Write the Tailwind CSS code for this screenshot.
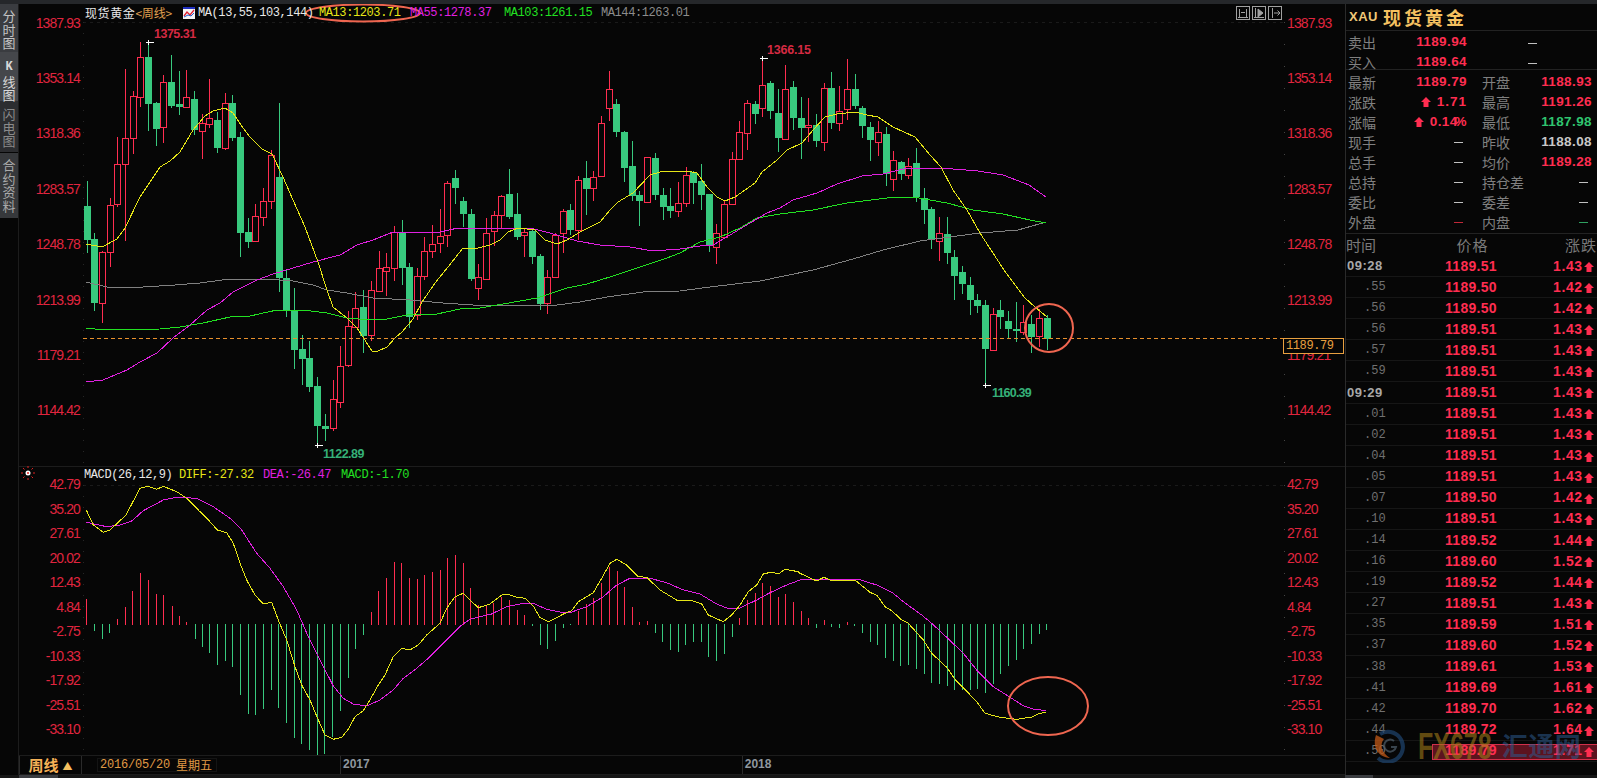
<!DOCTYPE html>
<html lang="zh">
<head>
  <meta charset="UTF-8">
  <title>现货黄金 周线</title>
  <script src="https://cdn.jsdelivr.net/npm/@tailwindcss/browser@4"></script>
</head>
<body class="bg-[#060606] overflow-hidden font-['Liberation_Sans','Noto_Sans_CJK_SC',sans-serif]">
<div class="w-[1597px] h-[778px] flex flex-col overflow-hidden">
  <div class="h-[4px] bg-[#25272a]"></div>

  <div class="flex h-[771px]">
    <!-- 左侧标签 -->
    <div class="w-[19px] border-r border-[#1c1c1c] text-[13px] leading-[13.5px] text-center font-['Noto_Sans_CJK_SC',sans-serif]">
      <div class="h-[48px] pt-[5px] bg-[#3a3c40] text-[#c4c4c4]">分<br>时<br>图</div>
      <div class="h-[49px] pt-[6px] bg-[#45474b] text-[#d8d8d8]"><span class="font-['Liberation_Mono',monospace] font-bold text-[12px]">K</span><br>线<br>图</div>
      <div class="h-[51px] pt-[6px] bg-[#2c2d30] text-[#8a8a8a]">闪<br>电<br>图</div>
      <div class="h-[65px] mt-[1px] pt-[5px] bg-[#36383b] text-[#aaaaaa]">合<br>约<br>资<br>料</div>
    </div>

    <!-- 图表区 -->
    <div class="w-[1326px] relative flex flex-col">
      <!-- K线 -->
      <div class="h-[463px] flex border-b border-[#1c1c1c]">
        <div class="w-[64px] pt-[10.7px] pr-[3px] flex flex-col gap-y-[39.4px] items-end text-[14px] leading-[16px] tracking-[-0.9px] text-[#e0253f]">
          <span>1387.93</span><span>1353.14</span><span>1318.36</span><span>1283.57</span><span>1248.78</span><span>1213.99</span><span>1179.21</span><span>1144.42</span>
        </div>
        <div class="w-[1202px] relative">
          <svg id="kline" class="absolute inset-0" width="1202" height="462" viewBox="83 4 1202 462"></svg>
          <div class="relative h-[18px] flex items-center justify-between pl-[2px] pr-[3px] text-[12px] leading-[18px] tracking-[-0.4px] font-['Liberation_Mono','Noto_Sans_CJK_SC',monospace]">
            <div class="flex items-center">
              <span class="text-[#e8e8e8] tracking-[0.6px] font-['Noto_Sans_CJK_SC',sans-serif]">现货黄金</span>
              <span class="text-[#e0a050] tracking-[-0.2px] font-['Noto_Sans_CJK_SC',sans-serif]">&lt;周线&gt;</span>
              <svg class="ml-[11px] mr-[3px]" width="12" height="12" viewBox="0 0 12 12"><rect width="12" height="12" fill="#f4f4f4"/><rect width="12" height="2" fill="#2030c0"/><path d="M1 9 L4 5 L7 8 L11 3" fill="none" stroke="#e02030" stroke-width="1.3"/><path d="M1 10 L5 8 L8 9 L11 6" fill="none" stroke="#2060d0"/></svg>
              <span class="text-[#e8e8e8] w-[121px] whitespace-nowrap">MA(13,55,103,144)</span>
              <span class="text-[#e6e617] w-[91px]">MA13:1203.71</span>
              <span class="text-[#e020e0] w-[94px]">MA55:1278.37</span>
              <span class="text-[#22e022] w-[97px]">MA103:1261.15</span>
              <span class="text-[#8c8c8c]">MA144:1263.01</span>
            </div>
            <div class="flex gap-[2px]">
              <svg width="14" height="14" viewBox="0 0 14 14" fill="none" stroke="#a0a0a0"><rect x=".5" y=".5" width="13" height="13"/><path d="M3.5 3v8M10.5 3v8M2 11.5h10M5 6.5h4"/></svg>
              <svg width="14" height="14" viewBox="0 0 14 14" fill="none" stroke="#a0a0a0"><rect x=".5" y=".5" width="13" height="13"/><path d="M3.5 2v10M2 11.5h10"/><path d="M6 3l5 4-5 4z" fill="#a0a0a0"/></svg>
              <svg width="14" height="14" viewBox="0 0 14 14" fill="none" stroke="#a0a0a0"><rect x=".5" y=".5" width="13" height="13"/><path d="M4.5 2v10M6 7h6M9.500 4.500l2.500 2.500-2.500 2.500"/></svg>
            </div>
          </div>
          <!-- 高低点标注 -->
          <span class="absolute left-[71px] top-[22px] text-[12.5px] leading-[16px] font-bold tracking-[-0.5px] text-[#d42a42]">1375.31</span>
          <span class="absolute left-[684px] top-[38px] text-[12.5px] leading-[16px] font-bold tracking-[-0.2px] text-[#d42a42]">1366.15</span>
          <span class="absolute left-[240px] top-[442px] text-[12.5px] leading-[16px] font-bold tracking-[-0.5px] text-[#35b078]">1122.89</span>
          <span class="absolute left-[909px] top-[381px] text-[12.5px] leading-[16px] font-bold tracking-[-0.8px] text-[#35b078]">1160.39</span>
        </div>
        <div class="flex-1 pt-[10.7px] pl-[2px] flex flex-col gap-y-[39.4px] text-[14px] leading-[16px] tracking-[-0.9px] text-[#e0253f]">
          <span>1387.93</span><span>1353.14</span><span>1318.36</span><span>1283.57</span><span>1248.78</span><span>1213.99</span><span>1179.21</span><span>1144.42</span>
        </div>
      </div>

      <!-- MACD -->
      <div class="h-[288px] flex">
        <div class="w-[64px] relative pt-[9px] pr-[3px] flex flex-col gap-y-[8.5px] items-end text-[14px] leading-[16px] tracking-[-0.9px] text-[#e0253f]">
          <svg class="absolute left-[2px] top-[-1px]" width="14" height="14" viewBox="0 0 14 14" stroke="#e02020"><path d="M7 0v2M7 12v2M0 7h2M12 7h2M2 2l1.500 1.500M12 2l-1.500 1.500M2 12l1.500-1.500M12 12l-1.500-1.500"/><circle cx="7" cy="7" r="2.500" fill="#ffffff" stroke="none"/><circle cx="7" cy="7" r="1" fill="#e02020" stroke="none"/></svg>
          <span>42.79</span><span>35.20</span><span>27.61</span><span>20.02</span><span>12.43</span><span>4.84</span><span>-2.75</span><span>-10.33</span><span>-17.92</span><span>-25.51</span><span>-33.10</span>
        </div>
        <div class="w-[1202px] relative">
          <svg id="macd" class="absolute inset-0" width="1202" height="288" viewBox="83 467 1202 288"></svg>
          <div class="relative h-[17px] pl-[1px] flex items-center text-[12px] leading-[17px] tracking-[-0.4px] font-['Liberation_Mono',monospace]">
            <span class="text-[#e8e8e8] w-[95px]">MACD(26,12,9)</span>
            <span class="text-[#e6e617] w-[84px]">DIFF:-27.32</span>
            <span class="text-[#e020e0] w-[78px]">DEA:-26.47</span>
            <span class="text-[#22e022]">MACD:-1.70</span>
          </div>
        </div>
        <div class="flex-1 pt-[9px] pl-[2px] flex flex-col gap-y-[8.5px] text-[14px] leading-[16px] tracking-[-0.9px] text-[#e0253f]">
          <span>42.79</span><span>35.20</span><span>27.61</span><span>20.02</span><span>12.43</span><span>4.84</span><span>-2.75</span><span>-10.33</span><span>-17.92</span><span>-25.51</span><span>-33.10</span>
        </div>
      </div>

      <!-- 时间轴 -->
      <div class="h-[20px] flex items-center border-t border-[#1c1c1c] border-b">
        <div class="w-[63px] h-full flex items-center justify-center gap-[4px] border-x border-[#2a2a2a] text-[#f5b056] font-bold text-[15px] font-['Noto_Sans_CJK_SC',sans-serif]">
          <span>周线</span><span class="text-[10px] text-[#f5c060]">▲</span>
        </div>
        <div class="ml-[15px] w-[120px] h-[14px] flex items-center pl-[2px] gap-[6px] border border-[#141414] text-[#e09a45] text-[12px] leading-[14px]">
          <span class="font-['Liberation_Mono',monospace] tracking-[-0.2px]">2016/05/20</span><span class="font-['Noto_Sans_CJK_SC',sans-serif]">星期五</span>
        </div>
        <div class="ml-[123px] h-full border-l border-[#2a2a2a] pl-[2px] text-[12px] leading-[16px] font-bold text-[#8f979f]">2017</div>
        <div class="ml-[372px] h-full border-l border-[#2a2a2a] pl-[2px] text-[12px] leading-[16px] font-bold text-[#8f979f]">2018</div>
      </div>

      <!-- 当前价 -->
      <div class="absolute left-[1264px] top-[334px] w-[61px] h-[16px] border border-[#e8a040] bg-[#060606] text-[#e8a040] text-[12px] leading-[14px] pl-[2px] tracking-[-0.4px] font-['Liberation_Mono',monospace]">1189.79</div>
    </div>

    <!-- 右侧报价 -->
    <div class="flex-1 relative border-l border-[#2a2a2a] overflow-hidden">
      <div class="h-[27px] flex items-center pl-[3px] border-b border-[#222222] text-[#f4c060]">
        <span class="text-[13px] font-bold tracking-[0.5px] text-[#f0c878]">XAU</span>
        <span class="ml-[5px] text-[18px] font-bold tracking-[3px] font-['Noto_Sans_CJK_SC',sans-serif]">现货黄金</span>
      </div>

      <div class="h-[39px] border-b border-[#222222] pt-[1px] text-[14px] leading-[20px]" id="quote"></div>
      <div class="h-[164px] pt-[2px] border-b border-[#222222] text-[14px] leading-[20px]" id="stats"></div>

      <div class="h-[22px] flex items-center text-[15px] text-[#7a7a7a] font-['Noto_Sans_CJK_SC',sans-serif]">
        <span class="w-[113px]">时间</span><span class="w-[111px] tracking-[1px]">价格</span><span class="whitespace-nowrap tracking-[1px]">涨跌</span>
      </div>
      <div id="ticks"></div>

      <!-- 水印 -->
      <div class="absolute left-[26px] top-[723px] flex items-center pointer-events-none">
        <svg width="34" height="36" viewBox="0 0 34 36" fill="none"><path d="M8 7a15 15 0 1 1-2 24" stroke="#1f4670" stroke-width="4" opacity=".7"/><path d="M4 8C0 20 6 30 18 31C10 26 7 18 12 12z" fill="#c25a18" opacity=".75"/><path d="M22 14a6 6 0 1 0 2 6h-5" stroke="#50606c" stroke-width="2" opacity=".7"/></svg>
        <span class="ml-[12px] text-[25px] leading-[32px] font-bold scale-y-150 text-[#a07a18]/60">FX678</span>
        <span class="ml-[10px] text-[26px] leading-[32px] tracking-[0.5px] font-bold text-[#2c5c90]/55 font-['Noto_Sans_CJK_SC',sans-serif]">汇通网</span>
      </div>
    </div>
  </div>

  <div class="h-[3px] bg-[#161616] flex">
    <div class="w-[19px]"></div><div class="w-[39px] bg-[#3a3c40]"></div>
    <div class="w-[1287px]"></div><div class="w-[28px] bg-[#3a3c40]"></div>
  </div>
</div>

<script>
  const RED = "#ff2d50", GREEN = "#38c97e", NS = "http://www.w3.org/2000/svg";
  function add(svg, tag, attrs) {
    const el = document.createElementNS(NS, tag);
    for (const k in attrs) el.setAttribute(k, attrs[k]);
    svg.appendChild(el);
  }
  // 缩放取点换算成页面坐标
  function z(ox, oy, arr) {
    const out = [];
    for (let i = 0; i < arr.length; i += 2) out.push((ox + arr[i] / 3).toFixed(1), (oy + arr[i + 1] / 3).toFixed(1));
    return out;
  }
  function line(svg, pts, color) {
    add(svg, "polyline", { points: pts.join(" "), fill: "none", stroke: color, "stroke-width": 1, "shape-rendering": "crispEdges" });
  }

  // [x, 实体上, 实体下, 高, 低, 1=阳线]
  const candles = [
    [87,206,240,181,253,0],[94,239,303,233,311,0],[102,252,303,251,323,1],[110,205,252,198,267,1],[117,164,204,137,207,1],
    [125,138,164,69,241,1],[133,96,138,91,154,1],[140,57,97,42,107,1],[148,57,104,42,131,0],[156,103,129,102,146,0],
    [163,82,127,75,143,1],[171,82,106,55,108,0],[179,104,107,71,115,0],[186,97,107,70,107,1],[194,99,130,91,135,0],
    [202,123,131,114,159,1],[209,118,124,79,128,1],[217,120,148,112,153,0],[225,103,148,93,150,1],[232,103,138,95,141,0],
    [240,137,233,132,257,0],[248,232,242,218,248,0],[255,216,241,204,241,1],[263,201,217,188,226,1],[271,155,201,150,209,1],
    [279,177,278,103,292,0],[286,278,310,269,317,0],[294,311,350,288,369,0],[302,349,359,335,385,0],[309,358,387,341,392,0],
    [317,386,426,377,445,0],[325,426,429,414,441,0],[333,399,428,380,431,1],[340,366,402,346,408,1],[348,326,365,311,367,1],
    [355,308,327,292,327,1],[363,307,336,290,353,0],[371,290,335,281,341,1],[379,268,291,251,291,1],[386,267,271,253,296,1],
    [394,232,268,226,281,1],[402,232,268,220,285,0],[409,267,317,263,328,0],[417,276,315,268,320,1],[424,251,276,237,280,1],
    [432,244,251,225,258,1],[440,236,243,209,253,1],[447,183,235,181,247,1],[455,178,188,170,204,0],[463,201,214,197,227,0],
    [471,214,279,209,281,0],[478,277,288,264,300,1],[486,233,279,218,279,1],[494,215,231,211,246,1],[501,196,215,195,228,1],
    [509,194,217,169,219,0],[517,214,237,193,240,0],[524,232,235,229,257,1],[532,231,257,229,264,0],[540,256,304,254,310,0],
    [547,277,303,270,314,1],[555,235,277,233,277,1],[563,211,233,209,253,1],[570,210,230,204,235,0],[578,180,230,176,240,1],
    [586,178,189,161,215,0],[593,177,188,171,201,1],[601,123,176,116,176,1],[609,89,108,71,121,1],[616,104,132,99,137,0],
    [624,132,168,131,182,0],[632,166,196,141,201,0],[639,195,201,191,226,0],[647,157,202,157,202,1],[655,158,195,153,200,0],
    [663,195,207,188,220,0],[670,206,211,188,218,0],[678,203,211,182,217,1],[686,175,203,167,207,1],[693,172,183,171,204,0],
    [701,181,195,164,210,0],[709,194,246,194,252,0],[716,233,247,224,264,1],[724,204,237,200,238,1],[732,159,204,152,204,1],
    [739,132,159,121,159,1],[747,103,133,100,150,1],[755,104,114,101,124,0],[762,85,108,58,117,1],[770,83,111,81,119,0],
    [778,113,138,89,152,0],[785,89,139,65,140,1],[793,87,118,81,130,0],[801,118,128,97,159,0],[808,125,127,98,142,1],
    [816,125,141,114,147,0],[824,88,142,83,151,1],[831,88,123,72,129,0],[839,111,123,86,131,1],[847,89,109,59,120,1],
    [855,89,106,74,109,0],[862,108,126,106,138,0],[870,127,140,122,161,0],[878,132,142,121,156,1],[886,134,174,127,186,0],
    [893,160,179,151,191,1],[901,162,174,161,180,0],[908,166,175,158,179,1],[916,163,197,148,202,0],[924,198,210,188,224,0],
    [931,209,239,207,249,0],[939,233,241,217,261,1],[947,234,253,217,264,0],[954,257,276,250,300,0],[962,272,284,266,294,0],
    [970,285,300,277,315,0],[977,300,306,294,313,0],[985,305,349,300,385,0],[993,314,350,308,350,1],[1000,310,317,300,329,0],
    [1008,321,329,311,338,0],[1016,329,331,302,342,0],[1023,322,332,305,335,1],[1031,324,337,315,353,0],[1039,318,336,309,347,1],
    [1047,318,339,315,350,0]
  ];

  const ma13 = [86,244,102,247,117,239,125,228,140,197,160,167,170,161,180,152,193,130,205,116,213,111,225,108,233,113,243,128,250,137,262,149,272,154,283,177,293,200,305,227,318,262,327,290,333,307,347,318,357,328,372,351,378,351,387,347,395,338,402,332,413,319,422,302,435,283,448,267,463,248,478,248,490,245,500,240,508,232,518,228,535,230,545,240,557,244,567,240,580,232,600,222,610,210,618,202,633,193,650,175,660,172,670,171,680,172,687,171,697,173,707,187,717,197,725,201,735,197,755,183,762,172,777,160,787,150,802,143,813,130,825,117,837,114,855,112,867,115,878,117,893,127,915,137,930,155,941,167,953,190,967,210,980,233,1004,270,1015,285,1025,298,1035,307,1047,317];
  const ma55 = [86,382,103,380,127,370,140,362,157,353,173,338,190,325,207,310,220,303,233,292,257,280,273,274,293,268,313,262,340,255,357,245,373,240,393,232,420,232,440,232,458,228,483,228,503,229,530,228,550,233,577,241,600,245,630,247,653,251,680,249,700,246,713,245,730,235,750,223,767,213,780,208,793,200,817,193,837,184,862,176,883,174,907,168,927,168,953,169,978,171,1003,175,1029,185,1046,197];
  const ma103 = [86,328,95,329,117,330,160,329,180,327,203,323,230,317,250,316,277,310,303,310,327,313,347,318,370,320,387,319,407,315,437,314,460,309,480,308,503,304,537,298,567,288,587,284,613,276,640,267,667,258,680,253,700,242,720,237,740,228,757,218,780,214,813,210,847,203,887,198,913,197,947,203,973,210,1003,214,1030,220,1046,223];
  const ma144 = [86,282,107,287,143,287,175,285,200,283,230,279,267,279,293,281,313,285,327,290,347,293,373,298,410,300,443,303,473,305,557,305,580,302,607,297,643,292,680,291,710,287,760,281,813,270,853,259,883,250,920,241,980,233,1018,230,1046,222];

  const k = document.getElementById("kline");
  add(k, "line", { x1: 83, x2: 1285, y1: 22.5, y2: 22.5, stroke: "#1a1a1a", "stroke-dasharray": "3 4" });
  add(k, "line", { x1: 83.5, x2: 83.5, y1: 22, y2: 466, stroke: "#262626", "stroke-dasharray": "1 10" });
  add(k, "line", { x1: 1284.5, x2: 1284.5, y1: 22, y2: 466, stroke: "#444444", "stroke-dasharray": "1 21" });
  candles.forEach(([x, t, b, h, l, up]) => {
    const c = up ? RED : GREEN;
    add(k, "line", { x1: x + .5, x2: x + .5, y1: h, y2: l, stroke: c, "shape-rendering": "crispEdges" });
    if (up) add(k, "rect", { x: x - 2.5, y: t + .5, width: 6, height: Math.max(b - t, 2), fill: "#060606", stroke: c, "shape-rendering": "crispEdges" });
    else add(k, "rect", { x: x - 3, y: t, width: 7, height: Math.max(b - t, 2), fill: c, "shape-rendering": "crispEdges" });
  });
  line(k, ma144, "#808080");
  line(k, ma103, "#22e022");
  line(k, ma55, "#e020e0");
  line(k, ma13, "#e6e617");
  add(k, "line", { x1: 83, x2: 1283, y1: 338.5, y2: 338.5, stroke: "#e8902c", "stroke-dasharray": "4 3" });
  // 最高最低标记
  [[148,42],[762,58],[317,445],[985,385]].forEach(([x, y]) => {
    add(k, "path", { d: `M${x - 2} ${y + .5}h8M${x + .5} ${y - 2}v5`, stroke: "#ffffff", "shape-rendering": "crispEdges" });
  });
  add(k, "ellipse", { cx: 363, cy: 13, rx: 57, ry: 8.5, fill: "none", stroke: "#ef6650", "stroke-width": 2 });
  add(k, "circle", { cx: 1049, cy: 328, r: 24, fill: "none", stroke: "#ef6650", "stroke-width": 2 });

  const bars = [86,599,94,631,102,639,109,633,117,619,125,607,132,591,140,573,148,580,156,594,163,595,172,606,179,616,186,622,
    195,639,202,647,209,653,217,665,225,661,232,667,240,695,248,714,255,715,263,709,271,690,278,708,286,723,294,738,301,744,309,750,317,755,324,754,332,737,340,711,348,678,355,649,363,635,
    371,612,378,591,386,578,394,562,401,563,409,578,417,579,424,575,432,572,440,570,447,558,455,555,463,563,470,588,478,605,486,606,
    493,603,501,597,509,600,517,610,524,615,532,626,540,645,547,649,555,641,563,628,570,625,578,611,586,604,593,598,601,583,609,567,617,571,624,587,632,607,639,622,647,621,
    655,633,662,642,670,650,678,652,685,645,693,642,701,642,708,657,716,661,724,654,732,637,739,618,747,600,755,593,762,583,770,586,778,597,785,594,793,602,801,611,808,618,
    816,628,824,620,831,627,839,628,847,622,854,626,862,633,870,642,877,645,885,658,893,661,900,666,908,665,916,669,924,674,931,683,939,684,947,686,954,690,962,690,970,690,977,689,985,693,993,684,1000,674,1008,666,1016,660,1023,649,1031,644,1039,634,1046,630];
  const diff = [].concat(
    z(0,440,[259,210,280,255,310,277,330,270,378,225,420,145,445,139,470,148,490,139,530,155,560,175,600,215,630,245,652,270,680,278,700,310,720,370,740,420,765,465,790,492,815,487,835,540,860,600,885,680,905,735,930,780,955,840,975,885,1000,898,1025,892,1045,868,1065,830,1090,812,1110,780,1135,735,1155,705,1180,650,1205,625,1230,630,1255,615,1280,585,1320,550,1340,505,1365,470,1390,460,1415,485,1435,503]),
    z(490,520,[0,252,35,225,55,223,80,232,105,235,130,258,150,293,175,305,205,290,225,280,245,272,265,245,310,218,335,175,360,130,380,118,410,135,445,170,470,172,510,210,565,243,600,240,635,252,655,285,700,305,725,285,750,255,775,215,800,195,820,162,845,156,865,162,885,148,925,155]),
    z(800,560,[0,40,50,63,72,52,90,60,120,63,165,60,210,97,232,107,255,140,275,152,305,180,325,190,370,240,395,280,440,322,465,358,490,383,530,425,555,460,600,472,650,478,695,471,715,461,738,457]));
  const dea = [].concat(
    z(0,440,[259,247,320,260,360,255,395,243,430,212,490,180,530,172,590,175,640,200,690,235,725,270,770,340,810,385,850,440,890,510,925,590,960,660,1000,738,1030,775,1060,792,1100,798,1140,780,1180,750,1210,715,1250,685,1290,650,1340,600,1385,555,1410,538,1460,525]),
    z(490,520,[0,284,50,260,100,250,130,250,170,268,210,276,245,276,290,260,340,230,380,195,420,175,480,175,530,188,575,208,630,222,680,252,710,264,745,266,800,240,840,218,890,195,930,180]),
    z(800,560,[0,58,175,58,230,75,280,100,310,125,365,165,395,190,440,232,490,280,530,330,580,380,630,412,670,437,700,447,738,452]));

  const m = document.getElementById("macd");
  add(m, "line", { x1: 83, x2: 1285, y1: 485.5, y2: 485.5, stroke: "#1a1a1a", "stroke-dasharray": "3 4" });
  add(m, "line", { x1: 83.5, x2: 83.5, y1: 485, y2: 755, stroke: "#262626", "stroke-dasharray": "1 10" });
  add(m, "line", { x1: 1284.5, x2: 1284.5, y1: 485, y2: 755, stroke: "#444444", "stroke-dasharray": "1 21" });
  for (let i = 0; i < bars.length; i += 2) {
    const y = bars[i + 1], up = y < 624;
    add(m, "line", { x1: bars[i] + .5, x2: bars[i] + .5, y1: up ? 625 : 624, y2: y, stroke: up ? RED : GREEN, "shape-rendering": "crispEdges" });
  }
  line(m, dea, "#e020e0");
  line(m, diff, "#e6e617");
  add(m, "ellipse", { cx: 1048, cy: 706, rx: 40, ry: 29, fill: "none", stroke: "#ef6650", "stroke-width": 2 });

  // 报价面板
  const arrow = `<svg class="inline-block" width="10" height="10" viewBox="0 0 10 10"><path d="M5 0L10 5H7.500V10H2.500V5H0Z" fill="#ff2d50"/></svg>`;
  const dash = c => `<span class="inline-block w-[9px] h-[1px] align-middle ${c}"></span>`;
  const num = "font-bold tracking-[0.4px] text-[13.5px] text-right";

  document.getElementById("quote").innerHTML = [["卖出","1189.94"],["买入","1189.64"]].map(([a, b]) =>
    `<div class="flex h-[20px] pl-[2px]"><span class="w-[37px] text-[#808080] font-['Noto_Sans_CJK_SC',sans-serif]">${a}</span><span class="w-[82px] ${num} text-[#ff2d50]">${b}</span><span class="ml-[61px]">${dash("bg-[#c0c0c0]")}</span></div>`).join("");

  const W = "text-[#ff2d50]";
  const stats = [
    ["最新", `<span class="${W}">1189.79</span>`, "开盘", `<span class="${W}">1188.93</span>`],
    ["涨跌", `${arrow}<span class="${W} ml-[6px] tracking-[1px]">1.71</span>`, "最高", `<span class="${W}">1191.26</span>`],
    ["涨幅", `${arrow}<span class="${W} ml-[6px]">0.14<span class="ml-[-3px]">%</span></span>`, "最低", `<span class="text-[#2fc46f]">1187.98</span>`],
    ["现手", dash("bg-[#c0c0c0] mr-[4px]"), "昨收", `<span class="text-[#c8c8c8]">1188.08</span>`],
    ["总手", dash("bg-[#c0c0c0] mr-[4px]"), "均价", `<span class="${W}">1189.28</span>`],
    ["总持", dash("bg-[#c0c0c0] mr-[4px]"), "持仓差", dash("bg-[#c0c0c0] mr-[4px]")],
    ["委比", dash("bg-[#c0c0c0] mr-[4px]"), "委差", dash("bg-[#c0c0c0] mr-[4px]")],
    ["外盘", dash("bg-[#c02838] mr-[4px]"), "内盘", dash("bg-[#2fa060] mr-[4px]")]
  ];
  document.getElementById("stats").innerHTML = stats.map(([a, b, c, d]) =>
    `<div class="flex h-[20px] pl-[2px]"><span class="w-[37px] text-[#808080] font-['Noto_Sans_CJK_SC',sans-serif]">${a}</span><span class="w-[82px] ${num} whitespace-nowrap">${b}</span><span class="ml-[15px] w-[50px] text-[#808080] whitespace-nowrap font-['Noto_Sans_CJK_SC',sans-serif]">${c}</span><span class="w-[60px] ${num} whitespace-nowrap">${d}</span></div>`).join("");

  const ticks = [["09:28","1189.51","1.43"],[".55","1189.50","1.42"],[".56","1189.50","1.42"],[".56","1189.51","1.43"],[".57","1189.51","1.43"],[".59","1189.51","1.43"],
    ["09:29","1189.51","1.43"],[".01","1189.51","1.43"],[".02","1189.51","1.43"],[".04","1189.51","1.43"],[".05","1189.51","1.43"],[".07","1189.50","1.42"],
    [".10","1189.51","1.43"],[".14","1189.52","1.44"],[".16","1189.60","1.52"],[".19","1189.52","1.44"],[".27","1189.51","1.43"],[".35","1189.59","1.51"],
    [".37","1189.60","1.52"],[".38","1189.61","1.53"],[".41","1189.69","1.61"],[".42","1189.70","1.62"],[".44","1189.72","1.64"],[".50","1189.79","1.71"]];
  document.getElementById("ticks").innerHTML = ticks.map(([t, p, d], i) => {
    const time = t[0] === "."
      ? `<span class="w-[99px] pl-[18px] text-[12px] text-[#707070] font-['Liberation_Mono',monospace]">${t}</span>`
      : `<span class="w-[99px] pl-[1px] text-[13px] font-bold tracking-[0.5px] text-[#a8a8a8]">${t}</span>`;
    const last = i === ticks.length - 1;
    return `<div class="relative flex items-center h-[21.09px] border-b border-[#161616] text-[#ff2d50]">${last ? `<div class="absolute left-[86px] top-[3px] w-[170px] h-[16px] border border-[#d0304a] bg-[#ff2d50]/35"></div>` : ""}${time}<span class="relative w-[108px] font-bold text-[14px] tracking-[0.3px]">${p}</span><span class="relative font-bold text-[14px] tracking-[0.6px] w-[31px]">${d}</span><span class="relative">${arrow}</span></div>`;
  }).join("");
</script>
</body>
</html>
